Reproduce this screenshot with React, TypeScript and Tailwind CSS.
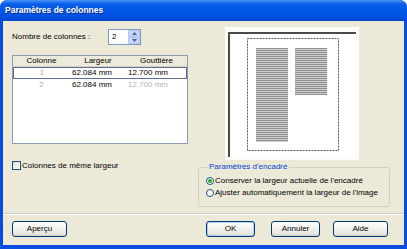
import React from "react";

function Stripes() {
  return (
    <svg width="126" height="123" viewBox="0 0 126 123" className="block">
      <defs>
        <pattern id="st" width="4" height="2" patternUnits="userSpaceOnUse">
          <rect width="4" height="2" fill="#cfcfcf" />
          <rect width="4" height="1" fill="#8e8e8e" />
        </pattern>
      </defs>
      <rect x="17.5" y="4.5" width="91" height="112" fill="none" stroke="#5a5a5a" strokeWidth="1" strokeDasharray="2 1" />
      <rect x="26" y="14" width="32" height="94" fill="url(#st)" />
      <rect x="65" y="14" width="32" height="47" fill="url(#st)" />
    </svg>
  );
}

function XpButton({ label, w, ml, def }: { label: string; w: string; ml: string; def?: boolean }) {
  return (
    <div
      className={`${w} ${ml} h-[16px] rounded-[3px] border border-[#003c74] bg-[linear-gradient(to_bottom,#ffffff_0%,#f4f4f0_40%,#e6e5de_85%,#d6d0c5_100%)] flex items-center justify-center ${
        def ? "shadow-[inset_0_0_0_1px_#b4cdf5]" : ""
      }`}
    >
      {label}
    </div>
  );
}

export default function App() {
  return (
    <div className="w-[407px] h-[249px] bg-[#0a4cdf] rounded-t-[7px] flex flex-col overflow-hidden font-['Liberation_Sans',Arial,sans-serif] text-[8px] text-black leading-none">
      <div className="h-[21px] shrink-0 flex items-center pl-[5px] rounded-t-[7px] bg-[linear-gradient(to_bottom,#4a96fb_0%,#0b60ea_18%,#0056e6_50%,#0052e0_80%,#0746cf_100%)]">
        <span className="text-white font-bold text-[8.5px] [text-shadow:1px_1px_0_#0a2a8a]">Paramètres de colonnes</span>
      </div>
      <div className="flex-1 mx-[3px] mb-[4px] bg-[#ece9d8] flex flex-col">
        {/* Row A */}
        <div className="flex pt-[6px] h-[139px] shrink-0">
          <div className="ml-[9px] w-[176px] flex flex-col">
            <div className="mt-[2px] h-[16px] flex items-center">
              <div className="w-[96px]">Nombre de colonnes :</div>
              <div className="w-[33px] h-[16px] border border-[#7f9db9] bg-white flex items-center">
                <span className="pl-[3px] flex-1">2</span>
                <div className="w-[12px] h-[14px] flex flex-col">
                  <div className="h-[7px] bg-[#c6d6fb] border border-[#b1c5f2] rounded-t-[1px] flex items-center justify-center">
                    <svg width="5" height="3" viewBox="0 0 5 3"><path d="M0 3 L2.5 0 L5 3 Z" fill="#4d6185" /></svg>
                  </div>
                  <div className="h-[7px] bg-[#c6d6fb] border border-[#b1c5f2] rounded-b-[1px] flex items-center justify-center">
                    <svg width="5" height="3" viewBox="0 0 5 3"><path d="M0 0 L2.5 3 L5 0 Z" fill="#4d6185" /></svg>
                  </div>
                </div>
              </div>
            </div>
            <div className="mt-[10px] h-[89px] border border-[#8c9cb4] bg-white flex flex-col">
              <div className="h-[11px] shrink-0 flex items-center bg-[#ebeadb] border-b border-[#d6d2c2]">
                <div className="w-[57px] text-center">Colonne</div>
                <div className="w-[56px] text-center">Largeur</div>
                <div className="flex-1 text-center">Gouttière</div>
              </div>
              <div className="h-[12px] flex items-center border border-[#5e6e92]">
                <div className="w-[56px] text-center text-[#a8a8a8]">1</div>
                <div className="w-[56px] pl-[2px]">62.084 mm</div>
                <div className="flex-1 pl-[2px]">12.700 mm</div>
              </div>
              <div className="h-[12px] flex items-center">
                <div className="w-[57px] text-center text-[#a8a8a8]">2</div>
                <div className="w-[56px] pl-[2px]">62.084 mm</div>
                <div className="flex-1 pl-[2px] text-[#b4b4b4]">12.700 mm</div>
              </div>
            </div>
          </div>
          <div className="ml-[37px] w-[134px] h-[133px] bg-[#fbfbf8] pt-[5px] pl-[3px]">
            <div className="w-[128px] h-[125px] bg-white border-l-2 border-t-2 border-[#4a4a4a]">
              <Stripes />
            </div>
          </div>
        </div>
        {/* Row B */}
        <div className="flex h-[47px] shrink-0">
          <div className="ml-[9px] w-[186px] pt-[1px] flex items-start">
            <div className="flex items-center h-[9px]">
              <div className="w-[9px] h-[9px] border border-[#1c5180] bg-[linear-gradient(135deg,#dcdcd7,#ffffff)]" />
              <span className="ml-[1px]">Colonnes de même largeur</span>
            </div>
          </div>
          <fieldset className="mt-[3px] w-[192px] h-[44px] border border-[#d0d0bf] rounded-[3px] pl-[7px]">
            <legend className="ml-[1px] px-[2px] text-[#0046d5]">Paramètres d'encadré</legend>
            <div className="pt-[4px] flex flex-col">
              <div className="h-[12px] flex items-center">
                <div className="w-[8px] h-[8px] rounded-full border border-[#1c5180] bg-white flex items-center justify-center">
                  <div className="w-[4px] h-[4px] rounded-full bg-[#2aa52a]" />
                </div>
                <span className="ml-[1px]">Conserver la largeur actuelle de l'encadré</span>
              </div>
              <div className="h-[12px] flex items-center">
                <div className="w-[8px] h-[8px] rounded-full border border-[#1c5180] bg-white" />
                <span className="ml-[1px]">Ajuster automatiquement la largeur de l'image</span>
              </div>
            </div>
          </fieldset>
        </div>
        {/* Separator */}
        <div className="mt-[6px] h-[2px] shrink-0 border-t border-[#d2cebd] border-b border-b-white" />
        {/* Buttons */}
        <div className="mt-[6px] flex h-[16px] shrink-0">
          <XpButton label="Aperçu" w="w-[55px]" ml="ml-[9px]" />
          <XpButton label="OK" w="w-[49px]" ml="ml-[139px]" def />
          <XpButton label="Annuler" w="w-[49px]" ml="ml-[16px]" />
          <XpButton label="Aide" w="w-[55px]" ml="ml-[13px]" />
        </div>
      </div>
    </div>
  );
}
